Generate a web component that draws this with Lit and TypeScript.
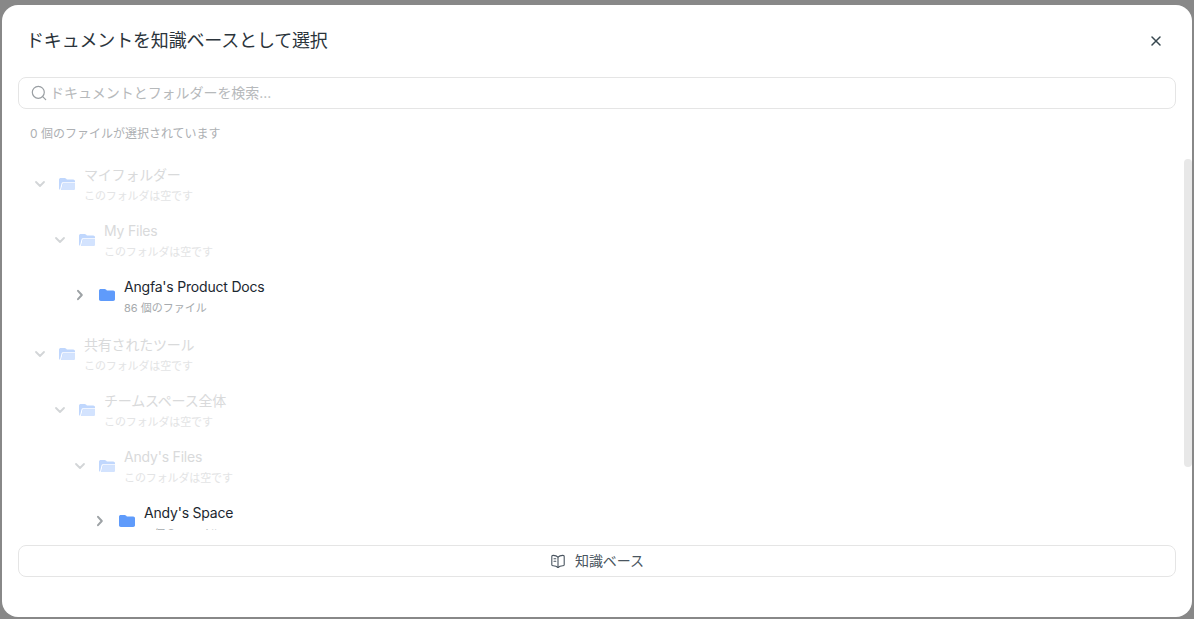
import { LitElement, html, css, svg } from "lit";
import { customElement } from "lit/decorators.js";

type TreeRow = { name: string; meta: string; depth: number; open: boolean };

const EMPTY = "このフォルダは空です";

const GROUPS: TreeRow[][] = [
  [
    { name: "マイフォルダー", meta: EMPTY, depth: 0, open: true },
    { name: "My Files", meta: EMPTY, depth: 1, open: true },
    { name: "Angfa's Product Docs", meta: "86 個のファイル", depth: 2, open: false },
  ],
  [
    { name: "共有されたツール", meta: EMPTY, depth: 0, open: true },
    { name: "チームスペース全体", meta: EMPTY, depth: 1, open: true },
    { name: "Andy's Files", meta: EMPTY, depth: 2, open: true },
    { name: "Andy's Space", meta: "4 個のファイル", depth: 3, open: false },
  ],
];

const chevronDown = svg`<path d="M4 6l4 4 4-4" fill="none" stroke="currentColor" stroke-width="1.8" stroke-linecap="round" stroke-linejoin="round"/>`;
const chevronRight = svg`<path d="M6 3.800l3.800 4.200L6 12.200" fill="none" stroke="currentColor" stroke-width="2" stroke-linecap="round" stroke-linejoin="round"/>`;
const folderClosed = svg`<path d="M0 3.600C0 2.700.8 2 1.800 2h3.800c.5 0 1 .2 1.400.6l.9.9h6.300c1 0 1.800.8 1.800 1.800v7c0 1-.8 1.700-1.800 1.700H1.800C.8 14 0 13.300 0 12.300z" fill="#5f9bfb"/>`;
const folderOpen = svg`
  <path d="M0 3.600C0 2.700.8 2 1.800 2h3.800c.5 0 1 .2 1.400.6l.9.9h6.300c1 0 1.800.8 1.800 1.800v7c0 1-.8 1.700-1.800 1.700H1.800C.8 14 0 13.300 0 12.300z" fill="#c0d7fd"/>
  <path d="M1.500 14l1.500-6.400c.1-.5.500-.8 1-.8h12" fill="none" stroke="#fff" stroke-width="1.100"/>
  <path d="M3.800 7.500H16v4.800c0 1-.8 1.700-1.800 1.700H2.300z" fill="#d3e3fe"/>`;

@customElement("app-root")
export class AppRoot extends LitElement {
  static styles = css`
    :host {
      display: block;
      height: 619px;
      box-sizing: border-box;
      padding: 5px 2px 2px;
      background: #888;
      font-family: Inter, "Noto Sans CJK JP", sans-serif;
      color: #1c2730;
    }
    .modal {
      position: relative;
      display: flex;
      flex-direction: column;
      height: 100%;
      box-sizing: border-box;
      padding: 0 16px 40px;
      background: #fff;
      border-radius: 16px;
      overflow: hidden;
    }
    .header {
      display: flex;
      align-items: center;
      justify-content: space-between;
      height: 72px;
      padding: 0 14px 0 8px;
      box-sizing: border-box;
      flex: none;
    }
    .title {
      font-size: 18px;
      line-height: 28px;
      font-weight: 400;
      letter-spacing: -0.17px;
      color: #2b343b;
      margin: 0;
    }
    .close {
      display: block;
      color: #37474f;
    }
    .search {
      display: flex;
      align-items: center;
      gap: 3px;
      height: 32px;
      box-sizing: border-box;
      padding: 0 12px;
      border: 1px solid #e5e5e5;
      border-radius: 8px;
      font-size: 14px;
      letter-spacing: -0.05px;
      color: #b6b9bb;
      flex: none;
    }
    .search svg {
      color: #9a9fa3;
      flex: none;
    }
    .label {
      padding-bottom: 2px;
    }
    .count {
      margin: 17px 0 14px 12px;
      font-size: 12px;
      line-height: 16px;
      color: #adb0b3;
      flex: none;
    }
    .tree {
      height: 374px;
      overflow: hidden;
      flex: none;
    }
    .group + .group {
      margin-top: 2px;
    }
    .row {
      display: flex;
      align-items: center;
      height: 56px;
      box-sizing: border-box;
    }
    .chevron {
      flex: none;
      margin-right: 11px;
      color: #9da2a5;
    }
    .folder {
      flex: none;
      margin-right: 9px;
    }
    .row.closed svg {
      margin-top: -2px;
    }
    .text {
      margin-top: 1px;
    }
    .name {
      font-size: 14px;
      line-height: 20px;
      letter-spacing: -0.2px;
    }
    .meta {
      font-size: 11px;
      line-height: 16px;
      margin-top: 3px;
      color: #a6aaad;
    }
    .row.open .chevron {
      color: #d2d5d7;
    }
    .row.open .name {
      color: #d9dadb;
    }
    .row.open .meta {
      color: #e3e4e5;
      letter-spacing: -0.12px;
    }
    .kb {
      display: flex;
      align-items: center;
      justify-content: center;
      gap: 9px;
      height: 32px;
      box-sizing: border-box;
      margin-top: 15px;
      border: 1px solid #e5e5e5;
      border-radius: 8px;
      font-size: 14px;
      letter-spacing: -0.05px;
      color: #4a5560;
      flex: none;
    }
    .scrollbar {
      position: absolute;
      top: 154px;
      right: 0;
      width: 8px;
      height: 308px;
      border-radius: 4px;
      background: #e8e8e8;
    }
  `;

  private renderRow(row: TreeRow) {
    return html`<div
      class="row ${row.open ? "open" : "closed"}"
      style="padding-left: ${14 + row.depth * 20}px"
    >
      <svg class="chevron" width="16" height="16" viewBox="0 0 16 16">
        ${row.open ? chevronDown : chevronRight}
      </svg>
      <svg class="folder" width="16" height="16" viewBox="0 0 16 16">
        ${row.open ? folderOpen : folderClosed}
      </svg>
      <div class="text">
        <div class="name">${row.name}</div>
        <div class="meta">${row.meta}</div>
      </div>
    </div>`;
  }

  render() {
    return html`<div class="modal">
      <div class="header">
        <h2 class="title">ドキュメントを知識ベースとして選択</h2>
        <svg class="close" width="12" height="12" viewBox="0 0 12 12">
          <path d="M2 2l8 8M10 2l-8 8" fill="none" stroke="currentColor" stroke-width="1.500" stroke-linecap="round"/>
        </svg>
      </div>
      <div class="search">
        <svg width="16" height="16" viewBox="0 0 16 16" fill="none" stroke="currentColor" stroke-width="1.200" stroke-linecap="round">
          <circle cx="7.300" cy="7.300" r="6"/>
          <path d="M11.700 11.700l3 3"/>
        </svg>
        <span class="label">ドキュメントとフォルダーを検索...</span>
      </div>
      <div class="count">0 個のファイルが選択されています</div>
      <div class="tree">
        ${GROUPS.map(
          (group) =>
            html`<div class="group">${group.map((row) => this.renderRow(row))}</div>`
        )}
      </div>
      <div class="kb">
        <svg width="16" height="16" viewBox="0 0 16 16" fill="none" stroke="currentColor" stroke-width="1.100" stroke-linejoin="round" stroke-linecap="round">
          <path d="M8 4.200C6.800 2.900 4.800 2.300 2.800 2.400c-.6 0-1 .4-1 1v8.400c0 .5.400.9 1 .9 2-.1 3.900.5 5.200 1.800 1.300-1.300 3.200-1.900 5.200-1.800.6 0 1-.4 1-.9V3.400c0-.6-.4-1-1-1-2-.1-4 .5-5.200 1.800z"/>
          <path d="M8 4.200v10.300M4 5.800h1.800M4 8.300h1.800"/>
        </svg>
        <span class="label">知識ベース</span>
      </div>
      <div class="scrollbar"></div>
    </div>`;
  }
}
